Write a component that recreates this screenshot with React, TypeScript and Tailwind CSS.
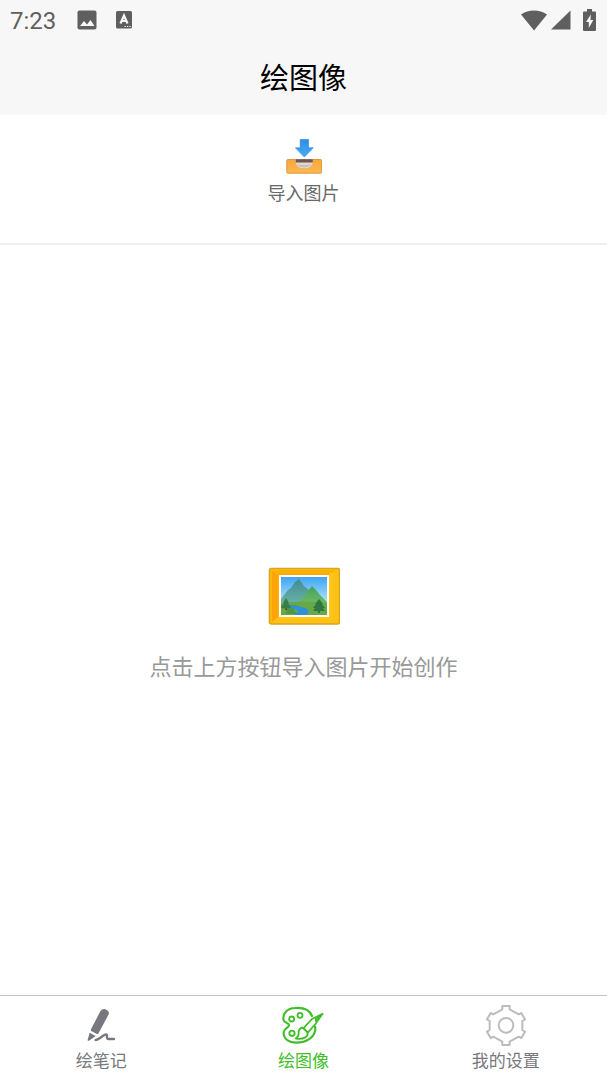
import { useState } from 'react'
import type { ReactNode } from 'react'

interface Tab {
  id: string
  label: string
  color: string
  icon: ReactNode
}

function StatusBar() {
  return (
    <div className="flex h-10 items-center justify-between px-2.5 text-[#5f5f5f]">
      <div className="flex items-center">
        <span className="w-[67px] pt-0.5 font-['Roboto',sans-serif] text-2xl leading-10">7:23</span>
        <svg className="h-5 w-5" viewBox="0 0 20 20" aria-hidden="true">
          <rect x="0.5" y="0.5" width="19" height="19" rx="2" fill="currentColor" />
          <path d="M3 16l4-5 3 3.5 3.5-4.5 4 6z" fill="#f7f7f7" />
        </svg>
        <svg className="ml-[19px] h-[18px] w-4" viewBox="0 0 16 18" aria-hidden="true">
          <rect width="16" height="17.5" rx="1.5" fill="currentColor" />
          <path d="M4.5 12.5L8 4.5l3.5 8M6 10h4" fill="none" stroke="#f7f7f7" strokeWidth="2.2" />
          <path d="M8.5 15.500h1.300M11 15.500h1.300M13.500 15.500h1.300" stroke="#f7f7f7" strokeWidth="1" />
        </svg>
      </div>
      <div className="flex items-center">
        <svg className="h-[21px] w-[26px]" viewBox="0 0 26 21" fill="currentColor" aria-hidden="true">
          <path d="M0 4.500C7.500-1 18.500-1 26 4.500L13 20.500z" />
        </svg>
        <svg className="ml-1 h-5 w-5" viewBox="0 0 20 20" fill="currentColor" aria-hidden="true">
          <path d="M19.500 0.500v19H0z" />
        </svg>
        <svg className="ml-3 mr-px h-[22px] w-[13px]" viewBox="0 0 13 22" aria-hidden="true">
          <path d="M4 0h5v2.500h3q1 0 1 1v17.500q0 1-1 1H1q-1 0-1-1V3.500q0-1 1-1h3z" fill="currentColor" />
          <path d="M7.800 5.500L3 13h2.800v6L10.300 11H7.500z" fill="#f7f7f7" />
        </svg>
      </div>
    </div>
  )
}

function ImportIcon() {
  return (
    <svg className="h-9 w-9" viewBox="0 0 36 36" aria-hidden="true">
      <defs>
        <linearGradient id="arrow" x1="0" y1="0" x2="0" y2="1">
          <stop offset="0" stopColor="#2f8de4" />
          <stop offset="1" stopColor="#45adf5" />
        </linearGradient>
        <linearGradient id="tray" x1="0" y1="0" x2="0" y2="1">
          <stop offset="0" stopColor="#f6a63c" />
          <stop offset="1" stopColor="#ffb94f" />
        </linearGradient>
      </defs>
      <rect x="0.800" y="21.500" width="34.800" height="13.700" rx="1" fill="url(#tray)" stroke="#dd9136" strokeWidth="0.900" />
      <path d="M9.500 21.200h17.500v2.500a8.700 6.600 0 0 1-17.500 0z" fill="#dedad6" />
      <path d="M11.500 26.300q6.700 2 13.500 0-2 3-6.700 3t-6.800-3z" fill="#c3bdbc" />
      <path d="M9.700 21.200h17.100v3.300H9.700z" fill="#765449" />
      <path d="M14.200 1.500h8.300v8.300h4.800L18.300 19l-8.900-9.200h4.800z" fill="url(#arrow)" stroke="#2585d8" strokeWidth="0.600" />
    </svg>
  )
}

function FramedPicture() {
  return (
    <svg className="h-[58px] w-18" viewBox="0 0 72 58" aria-hidden="true">
      <defs>
        <linearGradient id="sky" x1="0" y1="0" x2="0" y2="1">
          <stop offset="0" stopColor="#3ea5f4" />
          <stop offset="0.700" stopColor="#b9e7fa" />
        </linearGradient>
        <linearGradient id="mountain" x1="0" y1="0" x2="0" y2="1">
          <stop offset="0" stopColor="#3f8b96" />
          <stop offset="1" stopColor="#69b2a5" />
        </linearGradient>
        <linearGradient id="hill" x1="0" y1="0" x2="0" y2="1">
          <stop offset="0" stopColor="#43a25d" />
          <stop offset="1" stopColor="#72bd67" />
        </linearGradient>
      </defs>
      <rect x="1.500" y="1.500" width="70" height="55.500" rx="2" fill="#ffc113" stroke="#d9a51d" strokeWidth="1.600" />
      <path d="M3 3h66l-6 4H10z" fill="#ffb300" />
      <path d="M3 3l7 4v44l-7 4z" fill="#ffb60a" />
      <path d="M4 4l6 4v42l-6 5z" fill="#ffa408" />
      <path d="M9 6h54v45H9z" fill="#ffaa0c" />
      <path d="M61 6h4v46H9l3-3h49z" fill="#ffc51b" />
      <rect x="11" y="8" width="50" height="42" fill="#fffdf5" />
      <rect x="13" y="10" width="46" height="38" fill="url(#sky)" />
      <path d="M13 32l7-9 3-2 4-6 4-3 5 7 5 4 10 13H13z" fill="url(#mountain)" />
      <path d="M32 35l7-10 5-6 4 4 3 4 8 8v4H32z" fill="url(#hill)" />
      <path d="M13 36q22-3 46 0v12H13z" fill="#68a847" />
      <path d="M13 38q9-1 18 1-5 1-5 3 0 2 4 5H17q4-3 0-5l-4-1z" fill="#4e9845" />
      <path d="M21 38q-5 2 5 4 8 2 0 6h12q6-4-1-7-6-2-16-3z" fill="#2c91d8" />
      <path d="M18 31l-3 5h1l-3 5h10l-3-5h1z" fill="#367e45" />
      <path d="M51 32l-4 5h1l-3 4h2l-2 3h5v2h2v-2h5l-2-3h2l-3-4h1z" fill="#2f7845" />
      <path d="M17 41h2v2h-2z" fill="#65583a" />
    </svg>
  )
}

const tabs: Tab[] = [
  {
    id: 'notes',
    label: '绘笔记',
    color: 'text-[#77787d]',
    icon: (
      <svg className="h-[42px] w-[42px]" viewBox="45 45 126 126" fill="currentColor" aria-hidden="true">
        <path d="M106 64Q111 56 119 57L125 60Q134 64 131 73L101 129Q99 134 94 131L80 124Q76 122 78 118z" />
        <path d="M74 128L92 138L87 142L72 152Q68 154 68 149z" />
        <path d="M92 150Q98 149 105 144Q115 136 121 134Q127 132 126 139Q124 148 133 147L147 147" fill="none" stroke="currentColor" strokeWidth="7" strokeLinecap="round" strokeLinejoin="round" />
      </svg>
    ),
  },
  {
    id: 'images',
    label: '绘图像',
    color: 'text-[#41be2a]',
    icon: (
      <svg className="h-[42px] w-[42px]" viewBox="49 45 126 126" fill="none" stroke="currentColor" strokeWidth="6.500" strokeLinecap="round" strokeLinejoin="round" aria-hidden="true">
        <path d="M139 78C132 60 113 52 88 54C64 55 52 70 53 87C54 101 70 96 70 106C70 114 55 114 54 127C53 147 70 158 92 158C119 158 143 145 148 124Q150 117 148 110" />
        <circle cx="78" cy="87" r="7.500" strokeWidth="5.500" />
        <circle cx="103" cy="76" r="7.500" strokeWidth="5.500" />
        <circle cx="79" cy="130" r="8" strokeWidth="5.500" />
        <path d="M113 115L140 86L171 71L151 100L127 127z" strokeWidth="5" />
        <path d="M150 86L165 75L150 94z" fill="currentColor" strokeWidth="4" />
        <path d="M108 113Q97 119 99 132Q98 142 90 145Q106 149 119 142Q127 137 126 128L114 114z" strokeWidth="5.500" />
      </svg>
    ),
  },
  {
    id: 'settings',
    label: '我的设置',
    color: 'text-[#77787d]',
    icon: (
      <svg className="h-[42px] w-[42px] text-[#bcbcbc]" viewBox="74 45 126 126" fill="none" stroke="currentColor" strokeWidth="6" strokeLinejoin="round" aria-hidden="true">
        <path d="M126 48h22v10l27 15 8-4 11 19-8 5v27l8 5-11 19-8-4-27 15v10h-22v-10l-27-15-8 4-11-19 8-5V93l-8-5 11-19 8 4 27-15z" />
        <circle cx="137" cy="106" r="22" />
      </svg>
    ),
  },
]

export default function App() {
  const [activeTab, setActiveTab] = useState('images')

  return (
    <div className="flex min-h-screen flex-col bg-white font-['Noto_Sans_CJK_SC',sans-serif]">
      <header className="bg-[#f7f7f7]">
        <StatusBar />
        <h1 className="h-[75px] text-center text-[29px] leading-[72px] text-black">绘图像</h1>
      </header>

      <div className="flex justify-center border-b-2 border-[#efefef] pb-[35px] pt-[23px]">
        <button type="button" className="flex flex-col items-center text-lg leading-8 text-[#6a6a6a]">
          <ImportIcon />
          <span className="pt-0.5">导入图片</span>
        </button>
      </div>

      <main className="flex flex-1 flex-col items-center justify-center gap-6 pt-2 text-[#999999]">
        <FramedPicture />
        <p className="text-[22px] leading-8">点击上方按钮导入图片开始创作</p>
      </main>

      <nav className="grid grid-cols-3 border-t border-[#c4c4c4] pb-[7px] pt-[9px]">
        {tabs.map((tab) => (
          <button
            key={tab.id}
            type="button"
            aria-current={activeTab === tab.id ? 'page' : undefined}
            onClick={() => setActiveTab(tab.id)}
            className={`flex flex-col items-center text-[17px] leading-[26px] ${tab.color}`}
          >
            {tab.icon}
            <span>{tab.label}</span>
          </button>
        ))}
      </nav>
    </div>
  )
}
